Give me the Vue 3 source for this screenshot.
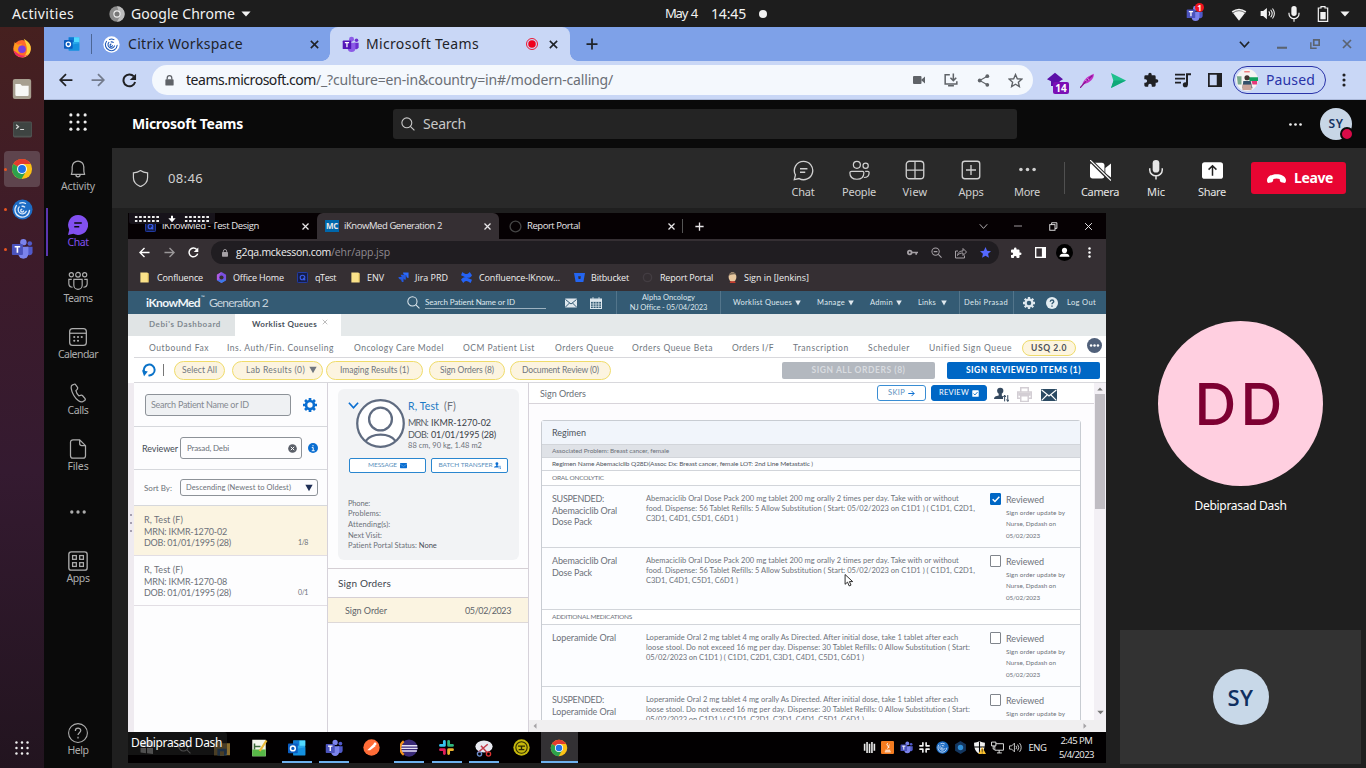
<script setup>
import { h } from 'vue'

// Spreads the letters of a label so that it takes the given width.
const vFit = {
  mounted(el, { value }) {
    const range = document.createRange()
    range.selectNodeContents(el)
    const natural = range.getBoundingClientRect().width
    const count = [...el.textContent].length
    el.style.letterSpacing = ((value - natural) / count).toFixed(3) + 'px'
  },
}

const chromeLogo = '<circle cx="12" cy="12" r="11" fill="#fbc116"/><path d="M12 12 2.5 6.500A11 11 0 0 1 21.500 6.500H12Z" fill="#e33b2e"/><path d="M2.500 6.500A11 11 0 0 0 11.500 23L16.500 14.500 12 12Z" fill="#2da24c"/><circle cx="12" cy="12" r="5.400" fill="#fff"/><circle cx="12" cy="12" r="4.300" fill="#1f73e8"/>'
const teamsLogo = '<circle cx="13.500" cy="4.500" r="3.500" fill="#7b83eb"/><circle cx="20.500" cy="6" r="2.500" fill="#5059c9"/><path d="M17 9.500h6.500V16a3.500 3.500 0 0 1-6.500 1Z" fill="#5059c9"/><path d="M8 9.500h11V17a5.500 5.500 0 0 1-11 0Z" fill="#7b83eb"/><rect x="1" y="6.500" width="12" height="12" rx="1" fill="#4b53bc"/><path d="M4 9.500h6M7 9.500v6.500" stroke="#fff" stroke-width="1.800"/>'
const citrixLogo = (bg, fg) => `<circle cx="12" cy="12" r="11.500" fill="${bg}"/><path d="M5 7.500a8.300 8.300 0 1 0 15 5.500M8.300 9a4.800 4.800 0 1 0 8 5M11.300 11.500a1.700 1.700 0 1 0 2 2M9 4.800a7.500 7.500 0 0 1 6.500.3M11.500 8.300a4 4 0 0 1 3 .8" stroke="${fg}" stroke-width="1.500" fill="none" stroke-linecap="round"/>`
const outlookLogo = '<rect x="7" y="2" width="16" height="19" fill="#28a8ea"/><path d="M15 2h8v7h-8z" fill="#50d9ff"/><path d="M7 2h8v7H7z" fill="#0f78d4"/><path d="M7 14l16-3v11H7z" fill="#1490df"/><rect x="0" y="6" width="13" height="13" rx="1" fill="#0a5cbf"/><circle cx="6.500" cy="12.500" r="3.200" stroke="#fff" stroke-width="2" fill="none"/>'
const puzzle = '<path d="M20.500 11H19V7a2 2 0 0 0-2-2h-4V3.500a2.500 2.500 0 0 0-5 0V5H4a2 2 0 0 0-2 2v3.800h1.500a2.700 2.700 0 0 1 0 5.400H2V20a2 2 0 0 0 2 2h3.800v-1.500a2.700 2.700 0 0 1 5.400 0V22H17a2 2 0 0 0 2-2v-4h1.500a2.500 2.500 0 0 0 0-5z" fill="currentColor"/>'
const slack = '<g stroke-width="4" stroke-linecap="round"><path d="M9 3.500v5.500M3.500 9H9" stroke="C1"/><path d="M15 3.500V9M15 9h5.500" stroke="C2"/><path d="M15 20.500V15M15 15h5.500" stroke="C3"/><path d="M9 20.500V15M3.500 15H9" stroke="C4"/></g>'

const icons = {
  chrome: chromeLogo,
  chromeGrey: '<circle cx="12" cy="12" r="11.500" fill="#8b8b8b"/><path d="M12 .5a11.500 11.500 0 0 1 0 23l5-9z" fill="#bdbdbd"/><circle cx="12" cy="12" r="5.500" fill="#eee"/><circle cx="12" cy="12" r="3.800" fill="#777"/>',
  teams: teamsLogo,
  teamsTab: teamsLogo.replace('#4b53bc', '#5316b8').replace(/#7b83eb/g, '#8c5be6').replace(/#5059c9/g, '#6c2fd0'),
  citrixWhite: citrixLogo('#fff', '#1d57b8'),
  citrixBlue: citrixLogo('#1d6cc4', '#dbe9fb'),
  outlook: outlookLogo,
  puzzle,
  caret: '<path d="M1 6h22L12 18z" fill="currentColor"/>',
  down: '<path d="M1 2h22L12 22z" fill="currentColor"/>',
  dropArrow: '<path d="M9 2h6v8h8L12 22 1 10h8z" fill="currentColor"/>',
  wifi: '<path d="M1 8q11-8 22 0L12 22z" fill="currentColor"/><path d="M2.500 10.500q9.500-7 19 0" stroke="#777" stroke-width="1.500"/>',
  speaker: '<path d="M1 8h4l6-5v18l-6-5H1z" fill="currentColor"/><path d="M14 8.500q3 3.500 0 7M17 6q5 6 0 12M20 4q6 8 0 16" stroke="currentColor" stroke-width="1.700"/>',
  micSolid: '<rect x="8" y="0" width="8" height="15" rx="4" fill="currentColor"/><path d="M4.500 10v2a7.500 7 0 0 0 15 0v-2M12 19v4.500" stroke="currentColor" stroke-width="1.800"/>',
  battery: '<path d="M9 1h6v2h4v20H5V3h4z" stroke="currentColor" stroke-width="1.800"/><rect x="8" y="9" width="8" height="11" fill="currentColor"/>',
  close: '<path d="M4 4l16 16M20 4 4 20" stroke="currentColor" stroke-width="3.400"/>',
  closeThin: '<path d="M3 3l18 18M21 3 3 21" stroke="currentColor" stroke-width="2.600"/>',
  plus: '<path d="M12 1v22M1 12h22" stroke="currentColor" stroke-width="3.500"/>',
  record: '<circle cx="12" cy="12" r="11" stroke="#f0001c" stroke-width="1.800"/><circle cx="12" cy="12" r="7.500" fill="#f0001c"/>',
  chevron: '<path d="M2 6l10 11L22 6" stroke="currentColor" stroke-width="3.600"/>',
  chevronThin: '<path d="M2 6l10 11L22 6" stroke="currentColor" stroke-width="2"/>',
  minimize: '<path d="M0 21h24" stroke="currentColor" stroke-width="5"/>',
  minThin: '<path d="M0 12h24" stroke="currentColor" stroke-width="2"/>',
  restore: '<path d="M9 2h13v13H9z" stroke="currentColor" stroke-width="4"/><path d="M2 8v14h14" stroke="currentColor" stroke-width="3.500"/>',
  restoreThin: '<rect x="2" y="7" width="14" height="15" stroke="currentColor" stroke-width="2.500"/><path d="M7 7V2h14v15h-5" stroke="currentColor" stroke-width="2.500"/>',
  back: '<path d="M23 12H3M12 2 2 12l10 10" stroke="currentColor" stroke-width="3"/>',
  forward: '<path d="M1 12h20M12 2l10 10-10 10" stroke="currentColor" stroke-width="3"/>',
  reload: '<path d="M21 14.500A9.500 9.500 0 1 1 19 5.500" stroke="currentColor" stroke-width="3.200"/><path d="M22.500 1v10h-10z" fill="currentColor"/>',
  lock: '<rect x="3" y="9" width="18" height="14" rx="2" fill="currentColor"/><path d="M7 10V6.500a5 5 0 0 1 10 0V10" stroke="currentColor" stroke-width="2.800"/>',
  video: '<rect x="0" y="4" width="17" height="16" rx="2" fill="currentColor"/><path d="M16 12 24 5v14z" fill="currentColor"/>',
  install: '<path d="M10 3H2v16h20v-5M7 22h10" stroke="currentColor" stroke-width="2.600"/><path d="M16 1v11M11 8l5 5 5-5" stroke="currentColor" stroke-width="2.600"/>',
  share: '<path d="M19 4 5 12l14 8" stroke="currentColor" stroke-width="2"/><circle cx="19" cy="4" r="3.500" fill="currentColor"/><circle cx="5" cy="12" r="3.500" fill="currentColor"/><circle cx="19" cy="20" r="3.500" fill="currentColor"/>',
  star: '<path d="M12 2.500l2.900 6.700 7.100.7-5.400 4.800 1.600 7.100L12 18l-6.200 3.800 1.600-7.100L2 9.900l7.100-.7z" stroke="currentColor" stroke-width="2.200"/>',
  starSolid: '<path d="M12 0l3.500 8.300 8.500.9-6.400 5.700 1.900 8.800L12 19.200 4.500 23.700l1.900-8.800L0 9.200l8.500-.9z" fill="currentColor"/>',
  hexa: '<path d="M12 1 24 11l-5 3v7H6v-7l-6-3z" fill="#5b0fa8"/>',
  feather: '<path d="M3 20C6 9 13 5 22 1c1 8-6 14-16 17z" fill="#c231c9"/><path d="M0 24C7 15 12 10 20 4" stroke="#8a1593" stroke-width="2"/><path d="M8 11l3 2M12 8l2 3" stroke="#f4c9f6" stroke-width="1"/>',
  send: '<path d="M0 0 24 12 0 24l4-11z" fill="#1fc08d"/><path d="M4 12h20L0 24z" fill="#0fa878"/>',
  music: '<path d="M0 4h15M0 10h15M0 16h9" stroke="currentColor" stroke-width="2.600"/><path d="M18 19V3.500h6" stroke="currentColor" stroke-width="3"/><circle cx="15.500" cy="19" r="3.800" fill="currentColor"/>',
  panel: '<rect x="1.500" y="1.500" width="21" height="21" stroke="currentColor" stroke-width="3"/><path d="M15 1h8v22h-8z" fill="currentColor"/>',
  vdots: '<circle cx="12" cy="3.500" r="2.700" fill="currentColor"/><circle cx="12" cy="12" r="2.700" fill="currentColor"/><circle cx="12" cy="20.500" r="2.700" fill="currentColor"/>',
  hdots: '<circle cx="2.700" cy="12" r="2.500" fill="currentColor"/><circle cx="12" cy="12" r="2.500" fill="currentColor"/><circle cx="21.300" cy="12" r="2.500" fill="currentColor"/>',
  waffle: '<g fill="currentColor"><circle cx="2.500" cy="2.500" r="2.100"/><circle cx="12" cy="2.500" r="2.100"/><circle cx="21.500" cy="2.500" r="2.100"/><circle cx="2.500" cy="12" r="2.100"/><circle cx="12" cy="12" r="2.100"/><circle cx="21.500" cy="12" r="2.100"/><circle cx="2.500" cy="21.500" r="2.100"/><circle cx="12" cy="21.500" r="2.100"/><circle cx="21.500" cy="21.500" r="2.100"/></g>',
  search: '<circle cx="10" cy="10" r="8.500" stroke="currentColor" stroke-width="1.900"/><path d="M16 16l7 7" stroke="currentColor" stroke-width="1.900"/>',
  photo: '<circle cx="12" cy="12" r="12" fill="#f6f4f2"/><path d="M1 8h5v9H2z" fill="#78a98c"/><path d="M13 9h11v4H15z" fill="#12a15c"/><path d="M17 13h6v4h-5z" fill="#e8387a"/><circle cx="12" cy="9.500" r="2.800" fill="#44352f"/><path d="M8 13h8l2 8H7z" fill="#33506a"/><path d="M7 17h10v6H7z" fill="#c9a49a"/><path d="M9 3h6" stroke="#e77" stroke-width="1.500"/>',
  firefox: '<circle cx="12" cy="13" r="10.500" fill="#ff6a2b"/><path d="M14 1c7 4 9 8 8.500 13A10.500 10.500 0 0 1 12 23.500C20 20 19 10 14 1Z" fill="#ffd03a"/><path d="M3 5l4 3 5-1-2 5 2 3-4 4-6-4z" fill="#ff9a1f"/><circle cx="12" cy="13.500" r="4.600" fill="#7a3fe0"/><path d="M2 15a10.500 10.500 0 0 0 18 4.500Q12 24 6 18z" fill="#f0246e"/>',
  files: '<rect x="1" y="0" width="22" height="24" rx="2.500" fill="#a79f90"/><path d="M4 6h6l2 2h8v11a1.500 1.500 0 0 1-1.500 1.500h-13A1.500 1.500 0 0 1 4 19z" fill="#f7f7f5"/>',
  terminal: '<rect x="0" y="2" width="24" height="20" rx="2" fill="#505452"/><rect x="1" y="3" width="22" height="17" rx="1" fill="#3e4442"/><path d="M4 6l3 2.500L4 11M9 12h5" stroke="#dadada" stroke-width="1.500"/>',
  bell: '<path d="M4 18.500C5.500 16 5 13 5 9.500a7 7 0 0 1 14 0c0 3.500-.5 6.500 1 9zM9.500 19a2.500 2.500 0 0 0 5 0" stroke="currentColor" stroke-width="1.500" stroke-linejoin="round"/>',
  chatSolid: '<path d="M12 0a12 12 0 1 1-5.500 22.600L0 24l1.500-6.300A12 12 0 0 1 12 0Z" fill="currentColor"/><path d="M7.500 9.500h9M7.500 14h6" stroke="#0a0a0a" stroke-width="1.700"/>',
  chat: '<path d="M12 1.500a10.500 10.500 0 1 1-5 19.700L1.500 22.500l1.300-5.500A10.500 10.500 0 0 1 12 1.500Z" stroke="currentColor" stroke-width="1.500"/><path d="M8 10h8.500M8 14h6" stroke="currentColor" stroke-width="1.500"/>',
  team: '<g stroke="currentColor" stroke-width="1.400"><circle cx="4" cy="4.500" r="2.500"/><circle cx="12" cy="4.500" r="2.800"/><circle cx="20" cy="4.500" r="2.500"/><path d="M7 10h10v7a5 5 0 0 1-10 0zM4.500 10H1v5.500a4.500 4.500 0 0 0 4.500 4M19.500 10H23v5.500a4.500 4.500 0 0 1-4.500 4"/></g>',
  calendar: '<rect x="2" y="2" width="20" height="20" rx="3.500" stroke="currentColor" stroke-width="1.500"/><path d="M2 7.500h20" stroke="currentColor" stroke-width="1.500"/><g fill="currentColor"><circle cx="7.500" cy="12" r="1.300"/><circle cx="12" cy="12" r="1.300"/><circle cx="16.500" cy="12" r="1.300"/><circle cx="7.500" cy="16.500" r="1.300"/><circle cx="12" cy="16.500" r="1.300"/></g>',
  phone: '<path d="M7.500 1.500 5 2.500C3 3.500 3.500 9 7 15s8 8.500 10.500 7.500l2.500-1.500c1-.8 1-1.500.3-2.500l-3-3.500c-.8-.8-1.500-.6-2.500-.2l-1.800.6c-2-1.400-3-4-3.500-6.200l1.500-1.600c.6-.8.800-1.200.5-2.300L9.500 2.500c-.4-1-1-1.400-2-1z" stroke="currentColor" stroke-width="1.500"/>',
  file: '<path d="M6 1h8l7 7v12a3 3 0 0 1-3 3H6a3 3 0 0 1-3-3V4a3 3 0 0 1 3-3zM14 1v4.500A2.500 2.500 0 0 0 16.500 8H21" stroke="currentColor" stroke-width="1.500"/>',
  apps: '<rect x="1" y="1" width="22" height="22" rx="3" stroke="currentColor" stroke-width="1.600"/><g stroke="currentColor" stroke-width="1.500"><rect x="5.500" y="5.500" width="4.500" height="4.500"/><rect x="14" y="5.500" width="4.500" height="4.500"/><rect x="5.500" y="14" width="4.500" height="4.500"/><rect x="14" y="14" width="4.500" height="4.500"/></g>',
  help: '<circle cx="12" cy="12" r="11.300" stroke="currentColor" stroke-width="1.300"/><path d="M8.800 9.500c0-4.500 6.500-4.200 6.500-.5 0 2.500-3.300 2.800-3.300 5.500M12 16.500v2" stroke="currentColor" stroke-width="1.500"/>',
  shield: '<path d="M12 .8c3 2.200 6 3 10 3.200V11c0 6-4 10-10 12.500C6 21 2 17 2 11V4c4-.2 7-1 10-3.200z" stroke="currentColor" stroke-width="1.700"/>',
  people: '<g stroke="currentColor" stroke-width="1.400"><circle cx="9" cy="5.500" r="4"/><circle cx="19" cy="6.500" r="3"/><path d="M3 13h12.500c1 0 1.500.6 1.500 1.500C17 19 14 22 9 22s-8-3-8-7.500c0-.9.800-1.500 2-1.500zM18.500 13h3c1 0 1.500.5 1.500 1.500 0 3-2 5.500-6 5.500"/></g>',
  view: '<rect x="1.500" y="1.500" width="21" height="21" rx="4" stroke="currentColor" stroke-width="1.600"/><path d="M12 1.500v21M1.500 12h21" stroke="currentColor" stroke-width="1.500"/>',
  addApp: '<rect x="1.500" y="1.500" width="21" height="21" rx="3" stroke="currentColor" stroke-width="1.600"/><path d="M12 6v12M6 12h12" stroke="currentColor" stroke-width="1.600"/>',
  cameraOff: '<rect x="0" y="3" width="16.500" height="18" rx="3" fill="#fff"/><path d="M17.500 9 24 4v16l-6.500-5z" fill="#fff"/><path d="M0 0l24 24" stroke="#292929" stroke-width="4"/><path d="M0 0l24 23.500" stroke="#fff" stroke-width="1.400"/>',
  shareTray: '<rect x="0" y="2.500" width="24" height="19" rx="3" fill="#fff"/><path d="M12 18V7M7.500 11 12 6.500l4.500 4.500" stroke="#222" stroke-width="1.700"/>',
  hangup: '<path d="M0 14C1 4 23 4 24 14c0 3-1 4-3 3.500l-3-.8c-1.500-.5-1.800-1.500-2-4-3-1-5-1-8 0-.2 2.500-.5 3.500-2 4l-3 .8c-2 .5-3-.5-3-3.500z" fill="#fff"/>',
  folder: '<path d="M3 1h15l3 2v20H3z" fill="#fbe28a"/><path d="M20 3v18" stroke="#d3ab41" stroke-width="1.500"/>',
  office: '<path d="M12 0 22 6v12l-10 6L2 18V6z" fill="#7a4fe0"/><path d="M12 0 2 6v12l5-2V8z" fill="#b05be0"/><path d="M2 18l10 6 10-6-5-3-5 3z" fill="#3a7be8"/><circle cx="12" cy="12" r="4.500" fill="#352f33"/>',
  qtest: '<rect x="1" y="1" width="22" height="22" rx="2" fill="#141d4a" stroke="#2440b0" stroke-width="2"/><circle cx="12" cy="12" r="5" stroke="#3a5ce6" stroke-width="2.500"/><path d="M13 13l5 5" stroke="#3a5ce6" stroke-width="2.500"/>',
  jira: '<path d="M11 1h12v12c-4 0-5-3-5-6-3 0-7-1-7-6z" fill="#2b6bff"/><path d="M6 6h11v11c-4 0-5-2-5-5-3 0-6-2-6-6zM1 11h11v11c-4 0-5-2-5-5-3 0-6-2-6-6z" fill="#2459e0"/>',
  confluence: '<path d="M0 17c5-8 9-7 24 0l-3 7C13 18 9 18 5 24zM24 7C19 15 14 14 0 7l3-7c7 6 11 6 16 0z" fill="#2462f5"/>',
  bitbucket: '<path d="M0 2h24l-3.500 20h-17zM9 9l1 6h4l1-6z" fill="#2465f0" fill-rule="evenodd"/>',
  ring: '<circle cx="12" cy="12" r="10" stroke="currentColor" stroke-width="2.500"/>',
  ringFaint: '<circle cx="12" cy="12" r="9" stroke="#433d42" stroke-width="3"/>',
  jenkins: '<ellipse cx="12" cy="11" rx="8.500" ry="10.500" fill="#e8c8a0"/><path d="M4 8C4 1 18-2 20 6l-4-1-8 1z" fill="#7a6a58"/><path d="M7 20h10l2 4H6z" fill="#c43b2e"/>',
  key: '<circle cx="6" cy="12" r="4" stroke="currentColor" stroke-width="4"/><path d="M11 12h13M20 12v5" stroke="currentColor" stroke-width="3.500"/>',
  zoomOut: '<circle cx="10" cy="10" r="8" stroke="currentColor" stroke-width="2.200"/><path d="M16 16l7 7M6 10h8" stroke="currentColor" stroke-width="2.400"/>',
  shareOut: '<path d="M6 8H1v14h18v-5" stroke="currentColor" stroke-width="2"/><path d="M5 17c1-7 5-9 11-9V3l7 7-7 7v-5c-5 0-8 1-11 5z" stroke="currentColor" stroke-width="2"/>',
  user: '<circle cx="12" cy="12" r="12" fill="#000"/><circle cx="12" cy="9" r="3.600" fill="#fff"/><path d="M5 18c0-6 14-6 14 0z" fill="#fff"/>',
  mail: '<rect x="0" y="3" width="24" height="18" rx="1.500" fill="currentColor"/><path d="M1 5l11 9L23 5M1 20l8-8M23 20l-8-8" stroke="#345b74" stroke-width="2"/>',
  mailDark: '<rect x="0" y="3" width="24" height="18" rx="1" fill="#2b4a63"/><path d="M1 4.500l11 9 11-9M1 20l8-8M23 20l-8-8" stroke="#fff" stroke-width="1.700"/>',
  calGrid: '<rect x="1" y="4" width="22" height="19" stroke="currentColor" stroke-width="2"/><path d="M1 5h22v4H1zM6 0v5M18 0v5M1 14h22M1 18.500h22M6.500 9v14M12 9v14M17.500 9v14" fill="currentColor" stroke="currentColor" stroke-width="1.500"/>',
  gear: '<circle cx="12" cy="12" r="6.800" stroke="currentColor" stroke-width="4.500"/><path d="M12 0v4M12 20v4M0 12h4M20 12h4M3.500 3.500l3 3M17.500 17.500l3 3M3.500 20.500l3-3M17.500 6.500l3-3" stroke="currentColor" stroke-width="4.600"/>',
  question: '<circle cx="12" cy="12" r="12" fill="#e4edf2"/><path d="M8.500 9.500c0-5 7-4.500 7-.5 0 2.500-3.500 2.800-3.500 5.500M12 17v2.500" stroke="#345b74" stroke-width="2.800"/>',
  undo: '<path d="M3.800 15.500A9.300 9.300 0 1 1 11 21.200" stroke="#0a72c8" stroke-width="3.400"/><path d="M0 12.500l10 2-6.500 8z" fill="#0a72c8"/>',
  moreRound: '<circle cx="12" cy="12" r="12" fill="#50607a"/><g fill="#fff"><circle cx="6.500" cy="12" r="2"/><circle cx="12" cy="12" r="2"/><circle cx="17.500" cy="12" r="2"/></g>',
  clear: '<circle cx="12" cy="12" r="11.500" fill="#5a5f68"/><path d="M7.500 7.500l9 9M16.500 7.500l-9 9" stroke="#fff" stroke-width="2.600"/>',
  info: '<circle cx="12" cy="12" r="12" fill="#0a6ed1"/><path d="M12 5v3M9 11h3.500v7M9 18.500h7" stroke="#fff" stroke-width="2.300"/>',
  portrait: '<circle cx="12" cy="12" r="11.400" fill="#fff" stroke="#5f6b80" stroke-width="1.100"/><circle cx="12" cy="9.800" r="5.600" stroke="#5f6b80" stroke-width="1.100"/><path d="M4.800 20.500c3-4 11.500-4 14.500 0" stroke="#5f6b80" stroke-width="1.100"/>',
  arrow: '<path d="M1 12h20M12 3l9 9-9 9" stroke="#0a6ed1" stroke-width="3.400"/>',
  checkBox: '<rect x="1" y="1" width="22" height="22" rx="2" fill="#fff"/><path d="M5 12l5 5 9-10" stroke="#0067c5" stroke-width="3"/>',
  check: '<path d="M4 12.500l5.500 5.500L20 6.500" stroke="#fff" stroke-width="3.600"/>',
  userMove: '<circle cx="10" cy="6" r="5" fill="currentColor"/><path d="M7.500 10h5v4l2 1v4H0c0-4 3-4.500 7.500-5.500z" fill="currentColor"/><path d="M17 13v10M22 23V13M15 16l2-3 2 3M20 20l2 3 2-3" stroke="currentColor" stroke-width="1.600"/>',
  printer: '<path d="M6 8V1h12v7M5 18H1V8h22v10h-4M6 14h12v9H6z" stroke="#d3ced4" stroke-width="2.400"/><path d="M2 9h20v5H2z" fill="#d3ced4"/>',
  envelope: '<rect x="0" y="3" width="24" height="18" rx="2" fill="#0a6ed1"/><path d="M0 7l12 8 12-8" stroke="#8fbce8" stroke-width="1.500"/>',
  windows: '<path d="M1 3l10-1.500V11H1zM13 1.200 24 0v11H13zM1 13h10v9.500L1 21zM13 13h11v11l-11-1.300z" fill="#9a9a9a"/>',
  explorer: '<path d="M0 3h9l2 2h13v18H0z" fill="#e3b64c"/><path d="M5 13h14v10H5z" fill="#2f78c4"/><path d="M9 17h6v6H9z" fill="#e3b64c"/>',
  notepad: '<rect x="3" y="1" width="18" height="22" fill="#f3f6ec"/><path d="M3 14h18v9H3z" fill="#58b947"/><path d="M6 6v8M10 10h4M6 10h4" stroke="#3c6a3a" stroke-width="2"/><path d="M22 2 13 16" stroke="#e8b93a" stroke-width="3"/>',
  postman: '<circle cx="12" cy="12" r="11.500" fill="#ff6c37"/><path d="M6 16l9-9 3 3-8 6z" fill="#fff"/><circle cx="17" cy="7" r="2" fill="#fff"/>',
  eclipse: '<circle cx="12" cy="12" r="11.500" fill="#3a2a78"/><path d="M1 9h22M.5 12.500h23M1.500 16h21" stroke="#e6e0f5" stroke-width="1.800"/><path d="M5 3a11 11 0 0 0 0 18" stroke="#f7941e" stroke-width="3"/>',
  slack: slack.replace('C1', '#36c5f0').replace('C2', '#2eb67d').replace('C3', '#ecb22e').replace('C4', '#e01e5a'),
  slackMono: slack.replace(/C\d/g, '#f2f2f2').replace('stroke-width="4"', 'stroke-width="3"'),
  snip: '<ellipse cx="12" cy="10" rx="11.500" ry="8" fill="#e8e9f0"/><path d="M4 18 17 7M8 9l8 9" stroke="#c23b4a" stroke-width="2"/><circle cx="18" cy="20" r="2.800" stroke="#d33" stroke-width="1.800"/><circle cx="6" cy="20" r="2.800" stroke="#6b8fd0" stroke-width="1.800"/>',
  smile: '<circle cx="12" cy="12" r="11.500" fill="#c6b80c"/><circle cx="12" cy="12" r="8" stroke="#2c2a05" stroke-width="1.500"/><path d="M7 10h10M12 10v5M8 15h8" stroke="#2c2a05" stroke-width="2"/>',
  bars: '<path d="M3 5v13M7.500 2v20M12 5v17M16.500 2v20M21 5v13" stroke="#e8e8e8" stroke-width="3"/>',
  java: '<rect width="24" height="24" rx="2" fill="#f47c20"/><path d="M8 17h9M7 20h11M13 4c-6 4 4 5-1 10M16 7c-4 2 0 4-2 6" stroke="#fff" stroke-width="1.800"/>',
  cube: '<path d="M12 0l10 6v12l-10 6L2 18V6z" fill="#14365f"/><circle cx="12" cy="12" r="5" fill="#2f8fd8"/>',
  defender: '<path d="M12 0c3 2 7 3 10 3 0 10-2 16-10 21C4 19 2 13 2 3c3 0 7-1 10-3z" fill="#f2f2f2"/><path d="M12 1v21M2 11h20" stroke="#000" stroke-width="2"/><path d="M17 11l7 13H10z" fill="#fbc02d"/><path d="M17 15v5M17 21.500v1.500" stroke="#222" stroke-width="1.500"/>',
  network: '<path d="M7 5h16v12H7zM11 22h9M15 17v5" stroke="#eee" stroke-width="1.700"/><path d="M1 2h8v7H1zM4 9v6h3" stroke="#eee" stroke-width="1.700" fill="#000"/>',
  volume: '<path d="M1 9h4l5-5v16l-5-5H1z" stroke="#eee" stroke-width="1.500"/><path d="M13 9q2 3 0 6M16 6.500q4 5.500 0 11M19.500 4q6 8 0 16" stroke="#eee" stroke-width="1.600"/>',
  pointer: '<path d="M2 1v18l4.500-4 3 7 3.500-1.500-3-6.500h6z" fill="#fff" stroke="#111" stroke-width="1.600"/>',
}

// Square icon drawn on a 24-unit grid.
const Ico = (p) =>
  h('svg', { viewBox: '0 0 24 24', width: p.s, height: p.s, fill: 'none', innerHTML: icons[p.n] })
Ico.props = ['n', 's']

const dock = [
  { n: 'firefox', s: 20 }, { n: 'files', s: 20 }, { n: 'terminal', s: 19 },
  { n: 'chrome', s: 22, on: true, dot: true }, { n: 'citrixBlue', s: 21, dot: true }, { n: 'teams', s: 22, dot: true },
]
const rail = [
  { n: 'bell', t: 'Activity', w: 34 }, { n: 'chatSolid', t: 'Chat', w: 21, on: true }, { n: 'team', t: 'Teams', w: 29 },
  { n: 'calendar', t: 'Calendar', w: 40 }, { n: 'phone', t: 'Calls', w: 21 }, { n: 'file', t: 'Files', w: 21 },
  { n: 'hdots', t: '', w: 0 }, { n: 'apps', t: 'Apps', w: 23 },
]
const actions = [
  { n: 'chat', t: 'Chat', w: 23, s: 21 }, { n: 'people', t: 'People', w: 34, s: 21 }, { n: 'view', t: 'View', w: 25, s: 20 },
  { n: 'addApp', t: 'Apps', w: 25, s: 20 }, { n: 'hdots', t: 'More', w: 26, s: 17 },
]
const devices = [
  { n: 'cameraOff', t: 'Camera', w: 38, s: 21 }, { n: 'micSolid', t: 'Mic', w: 18, s: 20 }, { n: 'shareTray', t: 'Share', w: 28, s: 21 },
]
const bookmarks = [
  ['folder', 'Confluence', 46], ['office', 'Office Home', 51], ['qtest', 'qTest', 21], ['folder', 'ENV', 17], ['jira', 'Jira PRD', 33],
  ['confluence', 'Confluence-IKnow...', 81], ['bitbucket', 'Bitbucket', 38], ['ringFaint', 'Report Portal', 53], ['jenkins', 'Sign in [Jenkins]', 65],
]
const queues = [
  ['Outbound Fax', 60], ['Ins. Auth/Fin. Counseling', 107], ['Oncology Care Model', 90], ['OCM Patient List', 72], ['Orders Queue', 59],
  ['Orders Queue Beta', 81], ['Orders I/F', 42], ['Transcription', 56], ['Scheduler', 42], ['Unified Sign Queue', 83],
]
const menus = [['Worklist Queues', 59], ['Manage', 28], ['Admin', 23], ['Links', 18]]
const patients = [{ mrn: 'MRN: IKMR-1270-02', n: '1/8', on: true }, { mrn: 'MRN: IKMR-1270-08', n: '0/1' }]
const abema = [
  ['Abemaciclib Oral Dose Pack 200 mg tablet 200 mg orally 2 times per day. Take with or without', 313],
  ['food. Dispense: 56 Tablet Refills: 5 Allow Substitution ( Start: 05/02/2023 on C1D1 ) ( C1D1, C2D1,', 329],
  ['C3D1, C4D1, C5D1, C6D1 )', 92],
]
const loper = [
  ['Loperamide Oral 2 mg tablet 4 mg orally As Directed. After initial dose, take 1 tablet after each', 312],
  ['loose stool. Do not exceed 16 mg per day. Dispense: 30 Tablet Refills: 0 Allow Substitution ( Start:', 324],
  ['05/02/2023 on C1D1 ) ( C1D1, C2D1, C3D1, C4D1, C5D1, C6D1 )', 218],
]
const orders = [
  { name: [['SUSPENDED:', 52], ['Abemaciclib Oral', 65], ['Dose Pack', 40]], text: abema, on: true },
  { name: [['Abemaciclib Oral', 65], ['Dose Pack', 40]], text: abema },
  { head: 'ADDITIONAL MEDICATIONS', name: [['Loperamide Oral', 64]], text: loper },
  { name: [['SUSPENDED:', 52], ['Loperamide Oral', 64]], text: loper },
]
const tasks = [
  { n: 'windows', s: 13 }, { n: 'search', s: 13, dim: true }, { n: 'explorer', s: 16, dim: true }, { n: 'notepad', s: 18 },
  { n: 'outlook', s: 18, run: true }, { n: 'teams', s: 18, run: true }, { n: 'postman', s: 17 }, { n: 'eclipse', s: 18, run: true },
  { n: 'slack', s: 17, run: true }, { n: 'snip', s: 18, run: true }, { n: 'smile', s: 17 }, { n: 'chrome', s: 18, run: true, on: true },
]
const tray = ['bars', 'java', 'teams', 'slackMono', 'citrixBlue', 'cube', 'defender', 'network', 'volume']
</script>

<template>
  <div class="desktop">
    <header class="gnome">
      <span v-fit="62">Activities</span><Ico n="chromeGrey" s="16" /><span v-fit="104">Google Chrome</span><Ico n="caret" s="10" />
      <span v-fit="32" class="day">May 4</span><span v-fit="35">14:45</span><i class="dot"></i>
      <span class="notify"><Ico n="teams" s="17" /><b>1</b></span>
      <Ico n="wifi" s="16" /><Ico n="speaker" s="15" /><Ico n="micSolid" s="16" /><Ico n="battery" s="16" /><Ico n="caret" s="10" />
    </header>
    <div class="below">
      <aside class="dock">
        <div v-for="d in dock" :key="d.n" class="launcher" :class="{ on: d.on, run: d.dot }"><Ico :n="d.n" :s="d.s" /></div>
        <Ico n="waffle" s="14" class="show-apps" />
      </aside>
      <div class="browser">
        <div class="tabs">
          <Ico n="outlook" s="16" /><i class="sep"></i><Ico n="citrixWhite" s="17" /><span v-fit="115">Citrix Workspace</span><Ico n="close" s="11" />
          <div class="tab">
            <Ico n="teamsTab" s="17" /><span v-fit="113">Microsoft Teams</span><Ico n="record" s="12" /><Ico n="close" s="11" />
          </div>
          <Ico n="plus" s="12" /><Ico n="chevron" s="11" /><Ico n="minimize" s="10" class="win" /><Ico n="restore" s="10" class="win" /><Ico n="close" s="12" class="win" />
        </div>
        <div class="toolbar">
          <Ico n="back" s="14" /><Ico n="forward" s="14" class="faded" /><Ico n="reload" s="15" />
          <div class="omni">
            <Ico n="lock" s="11" /><span class="url"><span v-fit="130">teams.microsoft.com</span><em v-fit="297">/_?culture=en-in&amp;country=in#/modern-calling/</em></span>
            <Ico n="video" s="12" /><Ico n="install" s="14" /><Ico n="share" s="13" /><Ico n="star" s="15" />
          </div>
          <span class="ext"><Ico n="hexa" s="16" /><b>14</b></span>
          <Ico n="feather" s="15" /><Ico n="send" s="15" /><Ico n="puzzle" s="16" /><Ico n="music" s="16" /><Ico n="panel" s="14" />
          <div class="paused"><Ico n="photo" s="22" /><span v-fit="49">Paused</span></div>
          <Ico n="vdots" s="14" />
        </div>

        <div class="teams">
          <div class="titlebar">
            <Ico n="waffle" s="18" class="launch" /><strong v-fit="111">Microsoft Teams</strong>
            <div class="find"><Ico n="search" s="14" /><span v-fit="43">Search</span></div>
            <Ico n="hdots" s="13" /><div class="me"><span v-fit="15">SY</span></div>
          </div>
          <nav class="rail">
            <div v-for="r in rail" :key="r.n" class="entry" :class="[{ on: r.on }, r.n]">
              <Ico :n="r.n" :s="r.n === 'hdots' ? 16 : 20" /><span v-if="r.t" v-fit="r.w">{{ r.t }}</span>
            </div>
            <div class="entry last"><Ico n="help" s="20" /><span v-fit="21">Help</span></div>
          </nav>
          <main class="meeting">
            <div class="controls">
              <Ico n="shield" s="17" /><span v-fit="35" class="clock">08:46</span>
              <div v-for="a in actions" :key="a.t" class="action"><Ico :n="a.n" :s="a.s" /><span v-fit="a.w">{{ a.t }}</span></div>
              <i class="rule"></i>
              <div v-for="a in devices" :key="a.t" class="action lit"><Ico :n="a.n" :s="a.s" /><span v-fit="a.w">{{ a.t }}</span></div>
              <button class="leave"><Ico n="hangup" s="19" /><span v-fit="39">Leave</span></button>
            </div>
            <div class="stage">
              <section class="share">
                <div class="w-tabs">
                  <Ico n="qtest" s="11" /><span v-fit="97">iKnowMed - Test Design</span><Ico n="close" s="9" />
                  <div class="w-tab"><b class="mc"><span v-fit="12">MC</span></b><span v-fit="98">iKnowMed Generation 2</span><Ico n="close" s="9" /></div>
                  <Ico n="ring" s="13" class="ring" /><span v-fit="53">Report Portal</span><Ico n="close" s="9" /><i class="sep"></i><Ico n="plus" s="9" />
                  <Ico n="chevronThin" s="9" /><Ico n="minThin" s="8" /><Ico n="restoreThin" s="9" /><Ico n="closeThin" s="9" />
                </div>
                <div class="w-bar">
                  <Ico n="back" s="11" /><Ico n="forward" s="11" class="faded" /><Ico n="reload" s="11" />
                  <div class="w-omni">
                    <Ico n="lock" s="8" /><span class="url"><span v-fit="95">g2qa.mckesson.com</span><em v-fit="59">/ehr/app.jsp</em></span>
                    <Ico n="key" s="11" /><Ico n="zoomOut" s="11" /><Ico n="shareOut" s="12" /><Ico n="starSolid" s="11" class="fav" />
                  </div>
                  <Ico n="puzzle" s="12" /><Ico n="panel" s="11" /><Ico n="user" s="17" /><Ico n="vdots" s="11" />
                </div>
                <div class="w-marks">
                  <template v-for="b in bookmarks" :key="b[1]"><Ico :n="b[0]" s="11" /><span v-fit="b[2]">{{ b[1] }}</span></template>
                </div>

                <div class="app-head">
                  <strong v-fit="54">iKnowMed</strong><sup>™</sup><span v-fit="59" class="gen">Generation 2</span>
                  <Ico n="search" s="13" /><div class="lookup"><span v-fit="90">Search Patient Name or ID</span></div>
                  <Ico n="mail" s="12" /><Ico n="calGrid" s="12" />
                  <div class="site"><span v-fit="53">Alpha Oncology</span><span v-fit="77">NJ Office - 05/04/2023</span></div>
                  <template v-for="m in menus" :key="m[0]"><span v-fit="m[1]">{{ m[0] }}</span><Ico n="down" s="6" /></template>
                  <div class="who"><span v-fit="44">Debi Prasad</span></div>
                  <Ico n="gear" s="12" /><Ico n="question" s="12" /><span v-fit="29">Log Out</span>
                </div>
                <div class="app-tabs"><div><span v-fit="72">Debi's Dashboard</span></div><div class="on"><span v-fit="65">Worklist Queues</span><Ico n="closeThin" s="6" /></div></div>
                <div class="queues">
                  <span v-for="q in queues" :key="q[0]" v-fit="q[1]">{{ q[0] }}</span>
                  <div class="usq"><span v-fit="36">USQ 2.0</span></div><Ico n="moreRound" s="15" />
                </div>
                <div class="filters">
                  <Ico n="undo" s="14" /><i></i>
                  <div class="pill"><span v-fit="35">Select All</span></div>
                  <div class="pill lab"><span v-fit="59">Lab Results (0)</span><Ico n="down" s="8" /></div>
                  <div class="pill"><span v-fit="69">Imaging Results (1)</span></div>
                  <div class="pill"><span v-fit="54">Sign Orders (8)</span></div>
                  <div class="pill"><span v-fit="77">Document Review (0)</span></div>
                  <div class="bulk off"><span v-fit="94">SIGN ALL ORDERS (8)</span></div>
                  <div class="bulk"><span v-fit="115">SIGN REVIEWED ITEMS (1)</span></div>
                </div>

                <div class="work">
                  <div class="gutter"><i></i><i></i><i></i></div>
                  <div class="col list">
                    <div class="line l1"><div class="box grey"><span v-fit="98">Search Patient Name or ID</span></div><Ico n="gear" s="14" class="blue" /></div>
                    <div class="line l2"><span v-fit="36" class="dark">Reviewer</span><div class="box"><span v-fit="42">Prasad, Debi</span><Ico n="clear" s="9" /></div><Ico n="info" s="10" /></div>
                    <div class="line l3"><span v-fit="28">Sort By:</span><div class="box"><span v-fit="105">Descending (Newest to Oldest)</span><Ico n="down" s="8" class="navy" /></div></div>
                    <div v-for="p in patients" :key="p.mrn" class="patient" :class="{ on: p.on }">
                      <div><span v-fit="39">R, Test (F)</span></div><div><span v-fit="83">{{ p.mrn }}</span></div>
                      <div class="dob"><span v-fit="87">DOB: 01/01/1995 (28)</span><small v-fit="10">{{ p.n }}</small></div>
                    </div>
                  </div>
                  <div class="col detail">
                    <div class="card">
                      <div class="person">
                        <Ico n="chevron" s="11" class="blue" /><Ico n="portrait" s="49" />
                        <div class="facts">
                          <div class="name"><b v-fit="31">R, Test</b><span v-fit="12">(F)</span></div>
                          <div class="fact"><span v-fit="20">MRN:</span><b v-fit="60">IKMR-1270-02</b></div>
                          <div class="fact"><span v-fit="20">DOB:</span><b v-fit="65">01/01/1995 (28)</b></div>
                          <div class="size"><span v-fit="74">88 cm, 90 kg, 1.48 m2</span></div>
                        </div>
                      </div>
                      <div class="buttons">
                        <div><span v-fit="29">MESSAGE</span><Ico n="envelope" s="7" /></div>
                        <div><span v-fit="54">BATCH TRANSFER</span><Ico n="userMove" s="7" class="blue" /></div>
                      </div>
                      <div class="notes">
                        <div><span v-fit="22">Phone:</span></div><div><span v-fit="33">Problems:</span></div><div><span v-fit="42">Attending(s):</span></div>
                        <div><span v-fit="34">Next Visit:</span></div><div><span v-fit="69">Patient Portal Status:</span>&nbsp;<b v-fit="18">None</b></div>
                      </div>
                    </div>
                    <div class="so-head"><span v-fit="53">Sign Orders</span></div>
                    <div class="so-row"><span v-fit="42">Sign Order</span><span v-fit="46">05/02/2023</span></div>
                  </div>
                  <div class="orders">
                    <div class="o-head">
                      <span v-fit="46">Sign Orders</span>
                      <div class="btn"><span v-fit="17">SKIP</span><Ico n="arrow" s="7" /></div>
                      <div class="btn full"><span v-fit="30">REVIEW</span><Ico n="checkBox" s="7" /></div>
                      <Ico n="userMove" s="15" /><Ico n="printer" s="15" /><Ico n="mailDark" s="16" />
                    </div>
                    <div class="sheet">
                      <div class="r reg"><span v-fit="34">Regimen</span></div>
                      <div class="r prob"><span v-fit="117">Associated Problem: Breast cancer, female</span></div>
                      <div class="r rname"><span v-fit="261">Regimen Name Abemaciclib Q28D(Assoc Dx: Breast cancer, female LOT: 2nd Line Metastatic )</span></div>
                      <div class="r cat"><span v-fit="52">ORAL ONCOLYTIC</span></div>
                      <template v-for="(o, i) in orders" :key="i">
                        <div v-if="o.head" class="r cat"><span v-fit="80">{{ o.head }}</span></div>
                        <div class="order">
                          <div class="o-name"><div v-for="l in o.name" :key="l[0]"><span v-fit="l[1]">{{ l[0] }}</span></div></div>
                          <div class="o-text"><div v-for="l in o.text" :key="l[0]"><span v-fit="l[1]">{{ l[0] }}</span></div></div>
                          <div class="tick" :class="{ on: o.on }"><Ico v-if="o.on" n="check" s="10" /></div>
                          <div class="o-note">
                            <div class="rev"><span v-fit="38">Reviewed</span></div>
                            <div><span v-fit="59">Sign order update by</span></div><div><span v-fit="50">Nurse, Dpdash on</span></div><div><span v-fit="34">05/02/2023</span></div>
                          </div>
                        </div>
                      </template>
                    </div>
                  </div>
                  <div class="vbar"><Ico n="caret" s="6" class="up" /><i></i><Ico n="caret" s="7" /></div>
                  <div class="hbar"><Ico n="caret" s="6" class="left" /><Ico n="caret" s="6" class="right" /></div>
                </div>

                <div class="taskbar">
                  <div v-for="t in tasks" :key="t.n" class="task" :class="{ run: t.run, on: t.on, dim: t.dim }"><Ico :n="t.n" :s="t.s" /></div>
                  <div class="tray"><Ico v-for="t in tray" :key="t" :n="t" s="13" /></div>
                  <span v-fit="18" class="eng">ENG</span>
                  <div class="when"><span v-fit="32">2:45 PM</span><span v-fit="35">5/4/2023</span></div>
                </div>

                <div class="grip"><i></i><Ico n="dropArrow" s="8" /><i></i></div>
                <div class="caption"><span v-fit="91">Debiprasad Dash</span></div>
                <Ico n="pointer" s="13" class="pointer" />
              </section>
              <aside class="people">
                <div class="avatar"><span v-fit="92">DD</span></div>
                <div class="pname"><span v-fit="92">Debiprasad Dash</span></div>
                <div class="tile"><div class="self"><span v-fit="26">SY</span></div></div>
              </aside>
            </div>
          </main>
        </div>
      </div>
    </div>
  </div>
</template>

<style>
body { background: #1f1f1f; overflow: hidden; }
</style>

<style scoped>
* { box-sizing: border-box; }
.desktop { width: 1366px; height: 768px; overflow: hidden; font-family: "Noto Sans", "Open Sans", sans-serif; line-height: 1; white-space: nowrap; color: #eee; }
svg { display: block; flex: none; }
i, em { font-style: normal; }
.gnome { height: 27px; background: #1d1d1d; padding-left: 12px; display: grid; align-items: center; justify-items: start; font-size: 14px; color: #f2f2f2;
  grid-template-columns: 97px 22px 110px 424px 46px 48px 427px 45px 29px 26px 29px 25px 1fr; }
.day { font-size: 13px; word-spacing: 1.500px; }
.dot { width: 8px; height: 8px; border-radius: 50%; background: #f2f2f2; }
.notify { position: relative; }
.notify b { position: absolute; right: -1px; top: -2px; width: 9px; height: 9px; border-radius: 50%; background: #f0141e; font-size: 8px; line-height: 9px; text-align: center; }
.below { display: flex; height: 741px; }
.dock { width: 44px; flex: none; background: linear-gradient(#46201f, #3d1b2a 30%, #341a30 60%, #22141f); display: flex; flex-direction: column; align-items: center; gap: 4px; padding-top: 4px; position: relative; }
.launcher { width: 36px; height: 36px; border-radius: 4px; display: grid; place-items: center; position: relative; }
.launcher:first-child { padding-bottom: 2px; }
.launcher.on { background: #5e444d; }
.launcher.run::before { content: ""; position: absolute; left: 0; top: 17px; width: 3px; height: 3px; border-radius: 50%; background: #e95420; }
.show-apps { margin: auto 0 13px; }
.browser { width: 1322px; }
.tabs { height: 34px; background: #7ea1e8; color: #1f2328; padding-left: 20px; display: grid; align-items: center; justify-items: start; font-size: 14px;
  grid-template-columns: 27px 12px 25px 181px 21px 256px 653px 38px 33px 31px 1fr; }
.tabs .sep { width: 1px; height: 20px; background: #4c6695; }
.tab { width: 240px; height: 34px; background: #c9d7f6; border-radius: 8px 8px 0 0; padding-left: 12px; display: grid; align-items: center; justify-items: start; grid-template-columns: 24px 160px 22px 1fr; position: relative; }
.tab::before, .tab::after { content: ""; position: absolute; bottom: 0; width: 8px; height: 8px; }
.tab::before { left: -8px; background: radial-gradient(circle at 0 0, #7ea1e8 7.500px, #c9d7f6 8px); }
.tab::after { right: -8px; background: radial-gradient(circle at 100% 0, #7ea1e8 7.500px, #c9d7f6 8px); }
.win { color: #5b6370; }
.toolbar { height: 39px; background: #c9d7f6; border-bottom: 1px solid #aab8d8; color: #202124; padding-left: 15px; display: grid; align-items: center; justify-items: start;
  grid-template-columns: 32px 31px 30px 895px 33px 31px 32px 32px 33px 25px 104px 1fr; }
.faded { opacity: .5; }
.omni { width: 881px; height: 30px; border-radius: 15px; background: #f4f8fd; color: #5f6368; padding-left: 12px; font-size: 14px; display: grid; align-items: center; justify-items: start; grid-template-columns: 22px 727px 31px 33px 31px 1fr; }
.url { display: flex; color: #202124; }
.url em { color: #6b6f76; }
.ext { position: relative; }
.ext b { position: absolute; left: 6px; top: 10px; width: 16px; height: 12px; background: #7b0fb5; border-radius: 2px; color: #fff; font-size: 10px; line-height: 12px; text-align: center; }
.paused { width: 93px; height: 28px; border: 1px solid #2a33a8; border-radius: 14px; display: flex; align-items: center; gap: 8px; padding-left: 2px; color: #2a33a8; font-size: 14px; }
.teams { display: grid; grid-template-columns: 68px 1254px; grid-template-rows: 48px 620px; background: #0a0a0a; }
.titlebar { grid-column: 1 / 3; padding-left: 25px; display: grid; align-items: center; justify-items: start; font-size: 14px; grid-template-columns: 63px 261px 896px 31px 1fr; }
.launch { margin-top: -4px; }
.titlebar strong { color: #fff; }
.find { width: 624px; height: 30px; border-radius: 3px; background: #242424; display: flex; align-items: center; gap: 8px; padding-left: 8px; color: #c8c8c8; }
.me { width: 32px; height: 32px; border-radius: 50%; background: #c8d6e6; color: #14335f; font-size: 12px; font-weight: 600; display: grid; place-items: center; position: relative; }
.me::after { content: ""; position: absolute; right: -1px; bottom: 0; width: 10px; height: 10px; border: 2px solid #0a0a0a; box-sizing: content-box; margin: 0 -1px -1px 0; border-radius: 50%; background: #d80a48; }
.rail { display: flex; flex-direction: column; color: #adadad; font-size: 10.500px; }
.entry { height: 56px; display: flex; flex-direction: column; align-items: center; padding-top: 11px; gap: 2px; position: relative; }
.entry.hdots { padding-top: 20px; }
.entry.on { color: #8250f0; }
.entry.on::before { content: ""; position: absolute; left: 2px; top: 4px; width: 2px; height: 48px; background: #5b36b0; }
.entry.last { margin-top: auto; }
.controls { height: 60px; background: #292929; display: flex; align-items: center; padding-left: 20px; color: #d0d0d0; }
.clock { width: 35px; font-size: 13px; margin: 0 572px 0 19px; }
.action { width: 56px; height: 60px; display: flex; flex-direction: column; align-items: center; justify-content: space-between; padding: 12px 0 11px; font-size: 11px; }
.action:nth-child(7) { padding-top: 13px; }
.lit { color: #e6e6e6; }
.rule { width: 1px; height: 32px; background: #505050; margin: 0 7px 0 9px; }
.leave { width: 95px; height: 32px; margin-left: 11px; border: 0; border-radius: 3px; background: #e80532; color: #fff; font: 700 14px/1 "Noto Sans", sans-serif; display: flex; align-items: center; gap: 8px; padding: 0 0 0 16px; }
.stage { height: 560px; background: #1f1f1f; padding: 5px 0 0 16px; display: flex; }

.share { width: 978px; height: 550px; flex: none; position: relative; overflow: hidden; font-family: "Open Sans", "Noto Sans", sans-serif; font-size: 9.500px; background: #fff; }
.w-tabs { height: 26px; background: #060103; padding-left: 17px; display: grid; align-items: center; justify-items: start; color: #e8e6e8;
  grid-template-columns: 17px 139px 16px 192px 18px 140px 15px 13px 284px 35px 35px 35px 1fr; }
.w-tab { width: 182px; height: 26px; background: #352f33; border-radius: 6px 6px 0 0; padding-left: 8px; display: grid; grid-template-columns: 19px 139px 1fr; align-items: center; }
.mc { width: 14px; height: 12px; background: #0067ab; font-size: 8px; display: grid; place-items: center; }
.ring { color: #444; }
.w-tabs .sep { width: 1px; height: 14px; background: #555; }
.w-bar { height: 27px; background: #352f33; padding-left: 11px; display: grid; align-items: center; justify-items: start; color: #fff; grid-template-columns: 25px 24px 23px 799px 25px 21px 28px 1fr; }
.w-omni { width: 788px; height: 23px; border-radius: 12px; background: #201d21; color: #a5a0a5; font-size: 10.500px; padding-left: 10px; display: grid; align-items: center; justify-items: start; grid-template-columns: 15px 671px 24px 24px 25px 1fr; }
.w-omni .url { color: #eee; }
.w-omni em { color: #918c92; }
.fav { color: #5468ff; }
.w-marks { height: 25px; background: #352f33; padding: 0 0 3px 11px; display: grid; align-items: center; justify-items: start; font-size: 9px; color: #eee;
  grid-template-columns: 18px 59px 17px 64px 18px 35px 17px 31px 17px 46px 18px 95px 17px 51px 18px 67px 17px 1fr; }

.app-head { height: 23px; background: #345b74; padding-left: 18px; display: grid; align-items: center; justify-items: start; color: #dfe8ee; font: 7.500px/1 Lato, sans-serif;
  grid-template-columns: 55px 8px 198px 18px 140px 25px 27px 116px 62px 22px 31px 22px 26px 22px 23px 18px 64px 23px 21px 1fr; }
.app-head strong { font-size: 12px; font-weight: 700; color: #eef4f7; }
.app-head sup { font-size: 5px; align-self: start; padding-top: 4px; }
.app-head .gen { font-size: 12px; color: #c6d3dc; }
.lookup { width: 121px; border-bottom: 1px solid #9db2c0; padding: 2px 0; font-size: 8px; }
.site { width: 105px; height: 23px; border: solid #53758b; border-width: 0 1px; display: flex; flex-direction: column; align-items: center; justify-content: center; gap: 2px; margin-left: -1px; }
.who { height: 23px; width: 55px; border: solid #53758b; border-width: 0 1px; display: grid; align-items: center; padding-left: 4px; }
.app-tabs { height: 22px; background: #e5e9ea; display: flex; font: 700 8px/1 Lato, sans-serif; color: #7f8890; }
.app-tabs > div { width: 107px; padding: 0 0 2px 21px; display: flex; align-items: center; background: #e0e4e5; }
.app-tabs > .on { width: 106px; padding-left: 17px; background: #fff; color: #4a525c; gap: 5px; }
.app-tabs svg { margin-top: -4px; color: #999; }
.queues, .filters { margin-left: 6px; border-bottom: 1px solid #d8d8dc; font-family: Lato, sans-serif; color: #70767e; display: grid; align-items: center; justify-items: start; }
.queues { height: 22px; padding: 3px 0 0 15px; font-size: 8.500px; grid-template-columns: 78px 127px 109px 92px 77px 100px 61px 75px 61px 93px 65px 1fr; }
.usq { width: 54px; height: 16px; border: 1px solid #eedb6c; border-radius: 8px; background: #fdf5df; display: grid; place-items: center; color: #4b4f56; font-weight: 700; }
.queues svg { margin-top: -6px; }
.filters { height: 25px; padding-left: 8px; font-size: 8.500px; grid-template-columns: 21px 11px 58px 94px 103px 81px 272px 165px 1fr; }
.filters i { width: 1px; height: 12px; background: #777; }
.pill { height: 19px; border: 1px solid #f0dc6a; border-radius: 10px; background: #fcf4e0; display: flex; align-items: center; justify-content: center; width: 51px; }
.pill.lab { width: 91px; gap: 4px; padding-left: 8px; }
.pill:nth-child(5) { width: 97px; }
.pill:nth-child(6) { width: 76px; }
.pill:nth-child(7) { width: 101px; }
.bulk { width: 153px; height: 17px; border-radius: 2px; background: #0067c5; color: #fff; font-weight: 700; display: grid; place-items: center; }
.bulk.off { background: #b3b8bf; color: #d9dce0; }

.work { height: 349px; display: grid; grid-template-columns: 6px 194px 201px 565px 12px; grid-template-rows: 337px 12px; font-family: Lato, sans-serif; color: #6c7179; background: #fff; }
.gutter { grid-row: 1 / 3; background: #efebf0; display: flex; flex-direction: column; align-items: center; gap: 6px; padding-top: 131px; }
.gutter i { width: 2px; height: 2px; background: #a5a0b0; }
.col { grid-row: 1 / 3; border-right: 1px solid #d6d2da; background: #fdfdfe; }
.line { border-bottom: 1px solid #d6d8dc; display: flex; align-items: center; font-size: 8px; }
.l1 { height: 44px; padding-left: 11px; gap: 12px; }
.l2 { height: 43px; padding-left: 8px; gap: 2px; }
.l2 > :last-child { margin-left: 4px; }
.l3 { height: 36px; padding-left: 10px; }
.dark { color: #444b55; font-size: 9px; width: 36px; }
.box { width: 122px; height: 22px; border: 1px solid #8d9298; border-radius: 3px; display: flex; align-items: center; justify-content: space-between; padding: 0 4px 0 6px; }
.box.grey { width: 146px; background: #eff1f3; color: #858a91; font-size: 9px; padding-left: 5px; }
.l3 .box { width: 138px; height: 17px; margin-left: 8px; padding-left: 5px; font-size: 7.500px; }
.blue { color: #0a6ed1; }
.navy { color: #1f2f55; }
.patient { height: 50px; border-bottom: 1px solid #e2dee4; padding: 8px 0 0 10px; font-size: 9px; line-height: 11.500px; }
.patient.on { background: #fbf4e1; }
.dob { display: flex; justify-content: space-between; padding-right: 19px; }
.dob small { font-size: 7px; }
.card { margin: 6px 0 0 10px; width: 181px; height: 171px; border-radius: 6px; background: #f2f3f5; }
.person { display: flex; padding: 10px 0 0 10px; align-items: flex-start; height: 69px; }
.person > :first-child { margin-top: 1px; margin-right: -3px; }
.facts { margin-left: 3px; padding-top: 2px; }
.name { display: flex; gap: 5px; font-size: 10.500px; height: 17px; }
.name b { color: #1c79c4; font-weight: 400; }
.fact { display: flex; gap: 3px; font-size: 9px; height: 11.800px; color: #555b64; line-height: 9px; }
.fact b { color: #3a3f48; font-weight: 400; }
.size { font-size: 7.500px; }
.buttons { display: flex; gap: 5px; padding-left: 11px; }
.buttons > div { width: 77px; height: 15px; border: 1px solid #2a86cf; border-radius: 2px; background: #fff; display: flex; align-items: center; justify-content: center; gap: 3px; color: #5a90bd; font-size: 6.500px; }
.buttons > :last-child { gap: 1px; }
.notes { padding: 25.500px 0 0 10px; font-size: 7.500px; line-height: 10.700px; }
.notes > div { display: flex; }
.notes b { font-weight: 400; color: #4a4f58; }
.so-head { margin-top: 8px; height: 30px; border: solid #d5cfd4; border-width: 1px 0; padding-left: 10px; display: flex; align-items: center; font-size: 10px; color: #41464f; }
.so-row { height: 25px; border-bottom: 1px solid #ddd8d8; background: #fbf4e1; display: flex; align-items: center; justify-content: space-between; padding: 0 17px; font-size: 9px; color: #5f646b; }
.orders { background: #fdfcfe; overflow: hidden; }
.o-head { height: 21px; border-bottom: 1px solid #d8d4da; background: #fff; padding-left: 11px; display: grid; align-items: center; justify-items: start; font-size: 9px; grid-template-columns: 337px 54px 63px 23px 24px 1fr; color: #6a6f77; }
.o-head > svg { margin-top: 3px; color: #34495f; }
.btn { width: 49px; height: 16px; border: 1px solid #3a8dd3; border-radius: 3px; color: #5a8fbd; display: flex; align-items: center; justify-content: center; gap: 3px; font-size: 7.500px; }
.btn.full { width: 56px; background: #0067c5; border-color: #0067c5; color: #fff; }
.sheet { margin: 16px 0 0 12px; width: 540px; border: 1px solid #c8ccd2; border-radius: 3px 3px 0 0; background: #fcfdff; }
.r { padding-left: 10px; display: flex; align-items: center; border-bottom: 1px solid #d2d5da; font-size: 6.500px; }
.reg { height: 24px; background: #f1f5fb; font-size: 9px; color: #4d535d; }
.prob { height: 13px; background: #dfe2e7; }
.rname { height: 13px; color: #50555e; }
.cat { height: 15px; background: #fff; }
.order { height: 62px; border-bottom: 1px solid #d2d5da; display: grid; grid-template-columns: 94px 344px 16px 1fr; padding: 7px 0 0 10px; align-items: start; }
.o-name { font-size: 9px; line-height: 11.500px; }
.o-text { font-size: 7.500px; line-height: 9.900px; padding-top: 1px; }
.tick { width: 11px; height: 12px; border: 1px solid #80858c; border-radius: 1px; background: #fff; }
.tick.on { background: #0067c5; border-color: #0067c5; }
.tick svg { margin: 0 0 0 -.5px; }
.o-note { font-size: 6.300px; line-height: 11.300px; }
.rev { font-size: 9px; line-height: 14px; }
.vbar { background: #f3f0f5; display: flex; flex-direction: column; align-items: center; color: #777; padding: 3px 0 4px; justify-content: space-between; }
.vbar i { width: 10px; height: 115px; background: #c0bdc3; margin: 2px 0 auto; }
.up { transform: rotate(180deg); }
.hbar { grid-column: 4 / 6; background: #f0eff0; display: flex; align-items: center; justify-content: space-between; padding: 0 18px 0 3px; color: #a5a3a6; }
.left { transform: rotate(90deg); }
.right { transform: rotate(-90deg); }
.taskbar { height: 31px; background: #020001; display: flex; color: #eee; font-size: 9.500px; }
.task { width: 37.500px; display: grid; place-items: center; }
.task.dim svg { opacity: .6; }
.task.run { background: linear-gradient(#6db1ee, #6db1ee) 50% 100% / 30px 2px no-repeat; }
.task.on { background: linear-gradient(#6db1ee, #6db1ee) 0 100% / 100% 2px no-repeat #333134; }
.tray { margin-left: 285px; display: flex; align-items: center; gap: 5.300px; }
.eng { align-self: center; width: 18px; margin-left: 6px; }
.when { margin-left: 12px; width: 36px; display: flex; flex-direction: column; align-items: center; gap: 4px; justify-content: center; }
.grip { position: absolute; left: 1px; top: 0; width: 86px; height: 11px; background: #17131a; border-radius: 0 0 3px 3px; display: flex; justify-content: center; align-items: center; gap: 8px; color: #fff; }
.grip i { width: 26px; height: 8px; background: radial-gradient(circle, #eee 1px, transparent 1.300px) 0 0 / 4.300px 4px; }
.caption { position: absolute; left: 0; top: 519px; width: 99px; height: 23px; background: rgba(31, 31, 31, .6); border-radius: 0 3px 3px 0; padding: 5px 0 0 3px; color: #fff; font: 12px/1 "Noto Sans", sans-serif; }
.pointer { position: absolute; left: 716px; top: 361px; }

.people { width: 260px; display: flex; flex-direction: column; align-items: center; padding-left: 9px; }
.avatar { width: 165px; height: 165px; margin-top: 108px; border-radius: 50%; background: #ffcfe0; color: #7d0032; display: grid; place-items: center; font: 500 58px/1 Inter, "Noto Sans", sans-serif; }
.pname { margin-top: 14px; font-size: 12px; color: #fff; }
.tile { margin-top: auto; margin-bottom: 4.500px; width: 241px; height: 134px; background: #323232; display: grid; place-items: center; flex: none; }
.self { width: 56px; height: 56px; border-radius: 50%; background: #c8d8e8; color: #0f2f60; display: grid; place-items: center; font: 600 22px/1 "Open Sans", sans-serif; }
</style>
